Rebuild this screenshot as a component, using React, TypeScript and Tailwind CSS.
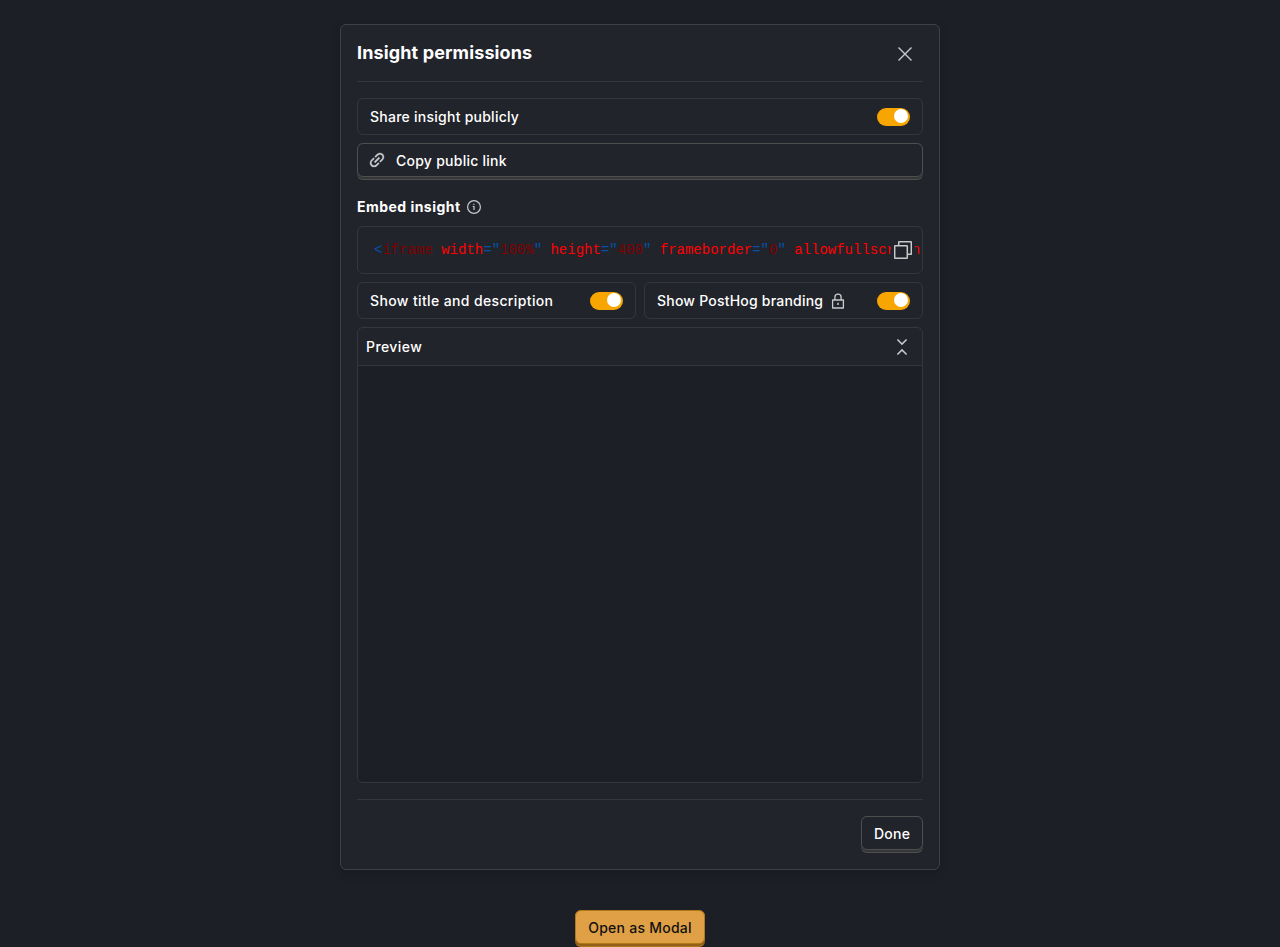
import React from 'react'

function Switch() {
    return (
        <span className="flex h-[18px] w-[33px] shrink-0 items-start justify-end rounded-full bg-[#f7a501] pt-[1.5px] pr-[2px]">
            <span className="h-[14px] w-[14px] rounded-full bg-white" />
        </span>
    )
}

function SwitchRow({ label, className, children }: { label: string; className?: string; children?: React.ReactNode }) {
    return (
        <div className="flex h-[37px] flex-1 items-center justify-between rounded-md border border-[#35373e] px-3">
            <span className="flex items-center gap-2">
                <span className={className}>{label}</span>
                {children}
            </span>
            <Switch />
        </div>
    )
}

function RaisedButton({ className, children }: { className?: string; children: React.ReactNode }) {
    return (
        <button
            className={`flex h-[37px] flex-col rounded-md border-b border-[#4f4f4f] bg-[#353638] ${className ?? ''}`}
        >
            <span className="flex h-[34px] w-full items-center justify-start rounded-md border border-[#4f4f4f] bg-[#22242b] px-3 pt-px">
                {children}
            </span>
        </button>
    )
}

function LinkIcon() {
    return (
        <svg className="-mt-px h-[20px] w-[20px]" viewBox="0 0 24 24" fill="#c9cacc" stroke="#c9cacc" strokeWidth=".3">
            <path
                transform="rotate(-45 12 12)"
                d="M3.9 12c0-1.71 1.39-3.1 3.1-3.1h4V7H7c-2.76 0-5 2.24-5 5s2.24 5 5 5h4v-1.9H7c-1.71 0-3.1-1.39-3.1-3.1zM8 13h8v-2H8v2zm9-6h-4v1.9h4c1.71 0 3.1 1.39 3.1 3.1s-1.39 3.1-3.1 3.1h-4V17h4c2.76 0 5-2.24 5-5s-2.24-5-5-5z"
            />
        </svg>
    )
}

function Code() {
    return (
        <pre className="font-['Liberation_Mono',monospace] text-[14px] leading-5 font-normal tracking-normal text-[#800000]">
            <span className="text-[#0451a5]">&lt;</span>iframe <span className="text-[#ff0000]">width</span>
            <span className="text-[#0451a5]">="</span>100%<span className="text-[#0451a5]">"</span>{' '}
            <span className="text-[#ff0000]">height</span>
            <span className="text-[#0451a5]">="</span>400<span className="text-[#0451a5]">"</span>{' '}
            <span className="text-[#ff0000]">frameborder</span>
            <span className="text-[#0451a5]">="</span>0<span className="text-[#0451a5]">"</span>{' '}
            <span className="text-[#ff0000]">allowfullscreen</span>
        </pre>
    )
}

export default function App() {
    return (
        <div className="flex h-[947px] flex-col items-center overflow-hidden bg-[#1d1f27] pt-6 font-['Inter',sans-serif] text-[14px] leading-5 font-medium tracking-[0.25px] text-white">
            <section className="flex h-[846px] w-[600px] shrink-0 flex-col rounded-md border border-[#404146] bg-[#22242b] px-4 shadow-[0_4px_10px_rgba(0,0,0,0.16)]">
                <header className="flex h-[57px] shrink-0 items-center justify-between border-b border-[#35373e] pr-[11px]">
                    <h3 className="text-[18px] leading-6 font-bold tracking-[0.13px]">Insight permissions</h3>
                    <svg className="mt-[2px] h-[14px] w-[14px]" viewBox="0 0 14 14" fill="none" stroke="#c9cacc" strokeWidth="1.4">
                        <path d="M.5.5l13 13M13.5.5l-13 13" />
                    </svg>
                </header>

                <div className="flex flex-col gap-2 pt-4">
                    <div className="flex">
                        <SwitchRow label="Share insight publicly" />
                    </div>
                    <RaisedButton className="w-full">
                        <span className="-ml-[3.5px] flex items-center gap-[9.5px]">
                            <LinkIcon />
                            Copy public link
                        </span>
                    </RaisedButton>
                </div>

                <h4 className="mt-4 flex h-[22px] items-center gap-[5px] font-bold tracking-[0.47px]">
                    Embed insight
                    <svg className="h-4 w-4" viewBox="0 0 16 16" fill="none" stroke="#c9cacc" strokeWidth="1.2">
                        <circle cx="8" cy="8" r="6.4" />
                        <path d="M6.7 7.5H8V11" />
                        <circle cx="7.9" cy="5.3" r=".45" fill="#c9cacc" strokeWidth=".5" />
                    </svg>
                </h4>

                <div className="mt-2 flex flex-col gap-2">
                    <div className="relative h-12 overflow-hidden rounded-md border border-[#35373e] px-4 pt-[13px]">
                        <Code />
                        <span className="absolute top-[11px] right-[7px] flex h-6 w-6 items-center justify-center bg-[#22242b]">
                            <svg className="h-[18px] w-[18px]" viewBox="0 0 18 18" fill="#22242b" stroke="#c9cacc" strokeWidth="1.5" strokeLinejoin="round">
                                <rect x="4.7" y=".7" width="12.6" height="12.6" rx=".6" />
                                <rect x=".7" y="4.7" width="12.6" height="12.6" rx=".6" />
                            </svg>
                        </span>
                    </div>

                    <div className="flex gap-2">
                        <SwitchRow label="Show title and description" className="tracking-[0.37px]" />
                        <SwitchRow label="Show PostHog branding" className="tracking-[0.22px]">
                            <svg className="h-4 w-[14px]" viewBox="0 0 14 16" fill="none" stroke="#c9cacc" strokeWidth="1.3" strokeLinejoin="round">
                                <path d="M1.6 7h10.800v8H1.6zM3.9 7V4.2a3.1 3.1 0 0 1 6.2 0V7" />
                                <path d="M7 9.8v2.1" strokeWidth="1.5" />
                            </svg>
                        </SwitchRow>
                    </div>

                    <div className="flex h-[456px] flex-col overflow-hidden rounded-md border border-[#35373e]">
                        <div className="flex h-[38px] shrink-0 items-center justify-between border-b border-[#35373e] pr-[14px] pl-2">
                            <span className="tracking-[0.42px]">Preview</span>
                            <svg className="h-4 w-3" viewBox="0 0 12 16" fill="none" stroke="#c9cacc" strokeWidth="1.5">
                                <path d="M1.4.5L6 5.1 10.6.5M1.4 15.5L6 10.9l4.6 4.6" />
                            </svg>
                        </div>
                        <div className="flex-1 bg-[#1d1f27]" />
                    </div>
                </div>

                <footer className="mt-4 flex justify-end border-t border-[#35373e] pt-4">
                    <RaisedButton className="w-[62px]">Done</RaisedButton>
                </footer>
            </section>

            <button className="mt-10 flex h-[37px] w-[130px] shrink-0 flex-col rounded-md border-b border-[#b17816] bg-[#91601a] text-[#111]">
                <span className="flex h-[34px] w-full items-center justify-center rounded-md border border-[#b17816] bg-[#e0a045] pt-px">
                    Open as Modal
                </span>
            </button>
        </div>
    )
}
